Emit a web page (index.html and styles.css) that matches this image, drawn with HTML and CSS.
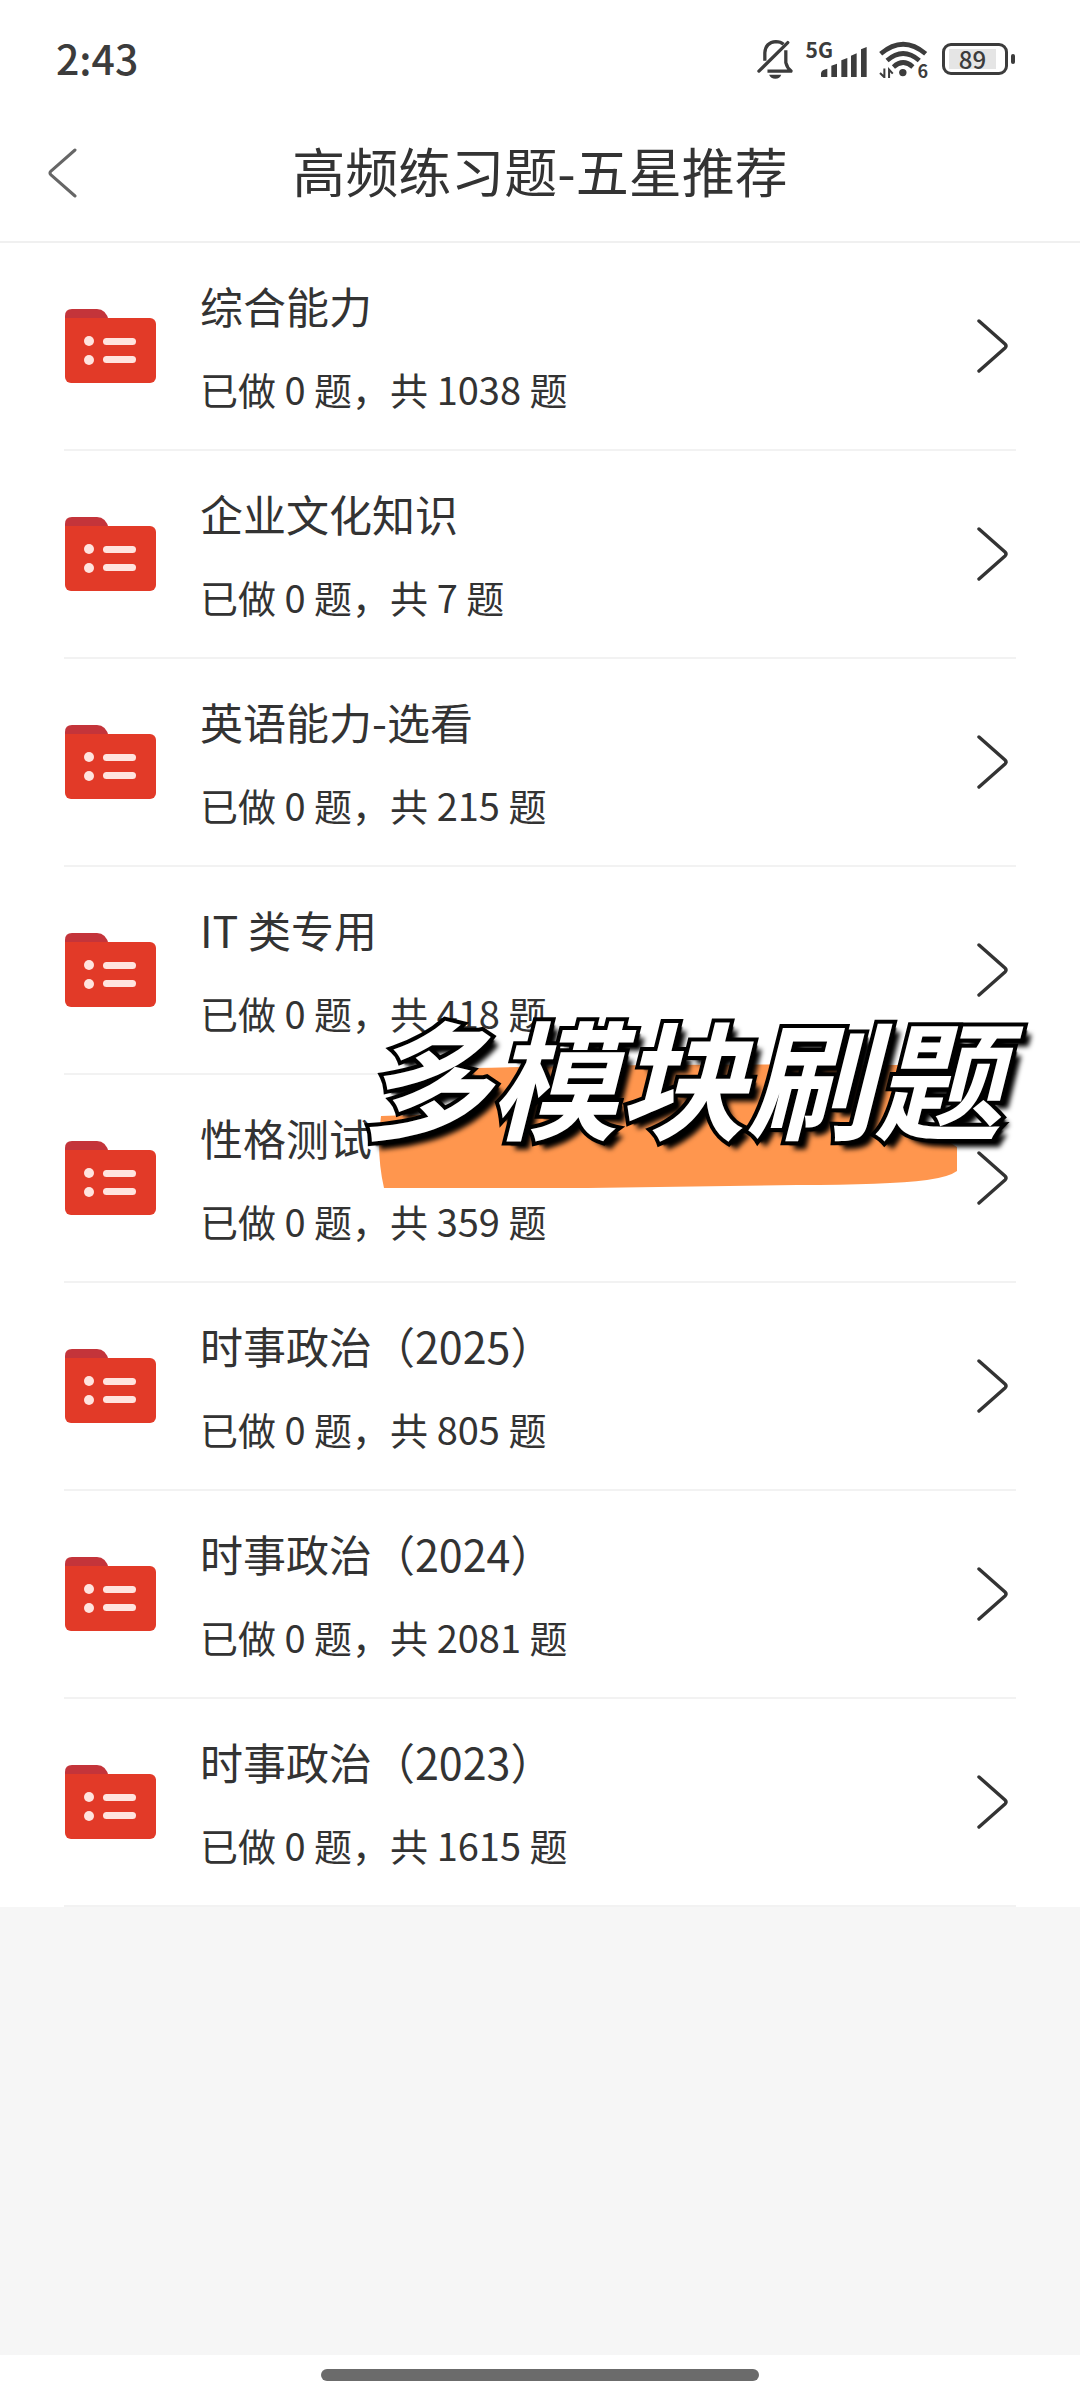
FILE: index.html
```html
<!doctype html>
<html lang="zh-CN">
  <head>
    <meta charset="utf-8">
    <meta name="viewport" content="width=device-width, initial-scale=1">
    <title>高频练习题-五星推荐</title>
    <link rel="stylesheet" href="styles.css">
  </head>
  <body>
    <!-- shared icons -->
    <svg class="defs" aria-hidden="true">
      <symbol id="folder" viewBox="0 0 92 76">
        <path fill="#c4343a" d="M1 20V8q0-7 7-7h25q9 0 12 12v7z"/>
        <rect x="1" y="10" width="91" height="65" rx="6" fill="#e23a28"/>
        <path fill="#e23a28" d="M1 10h12v12H1z"/>
        <g fill="#ffe4df">
          <circle cx="25" cy="33" r="5"/>
          <circle cx="25" cy="52" r="5"/>
          <rect x="39" y="30" width="33" height="7" rx="3.5"/>
          <rect x="39" y="48" width="33" height="7" rx="3.5"/>
        </g>
      </symbol>
      <symbol id="arrow" viewBox="0 0 32 56">
        <path fill="none" stroke="#333" stroke-width="3.4" stroke-linecap="round" d="M3 3l26 23q2 2 0 4L3 53"/>
      </symbol>
    </svg>

    <div class="statusbar">
      <span class="time">2:43</span>
      <div class="indicators">
        <svg class="bell" viewBox="58 58 114 122">
          <g fill="none" stroke="#3c3c3c" stroke-width="10" stroke-linecap="round">
            <path d="M66 156L154 69"/>
            <path stroke-linecap="butt" d="M84 124v-24q2-32 34-34q14 0 23 8"/>
            <path stroke-linecap="butt" stroke-linejoin="round" d="M148 92v38q4 16 16 26H92"/>
          </g>
          <path fill="#3c3c3c" d="M97 167h37q-4 12-18 12t-19-12z"/>
        </svg>
        <div class="mobile">
          <span class="net">5G</span>
          <svg class="signal" viewBox="246 75 138 90">
            <g fill="#3c3c3c">
              <path d="M246 165v-12q2-10 19-13v25zM277 165v-34l17-6v40zM307 165v-50l18-7v57zM336 165v-64l17-7v71zM366 165V82l17-7v90z"/>
            </g>
          </svg>
        </div>
        <div class="wifi">
          <svg viewBox="422 65 146 110">
            <g fill="none" stroke="#3c3c3c" stroke-width="14">
              <path d="M427 103q67-57 134 0"/>
              <path d="M446 123q48-42 96 0"/>
              <path d="M465 142q29-26 58 0"/>
            </g>
            <circle cx="493" cy="159" r="11" fill="#3c3c3c"/>
            <path fill="none" stroke="#3c3c3c" stroke-width="6" d="M438 147v26l-13-13M452 175v-25l11 12"/>
          </svg>
          <span class="gen">6</span>
        </div>
        <div class="battery"><span class="level">89</span></div>
      </div>
    </div>

    <header class="topbar">
      <button class="back" type="button" aria-label="返回">
        <svg viewBox="0 0 30 52">
          <path fill="none" stroke="#666" stroke-width="3" stroke-linecap="round" d="M27 3L3 24q-2 2 0 4l24 21"/>
        </svg>
      </button>
      <h1>高频练习题-五星推荐</h1>
    </header>

    <main>
      <div class="list">
        <a class="item" href="#">
          <svg class="folder"><use href="#folder"/></svg>
          <div class="info"><h2>综合能力</h2><p>已做 0 题，共 1038 题</p></div>
          <svg class="arrow"><use href="#arrow"/></svg>
        </a>
        <a class="item" href="#">
          <svg class="folder"><use href="#folder"/></svg>
          <div class="info"><h2>企业文化知识</h2><p>已做 0 题，共 7 题</p></div>
          <svg class="arrow"><use href="#arrow"/></svg>
        </a>
        <a class="item" href="#">
          <svg class="folder"><use href="#folder"/></svg>
          <div class="info"><h2>英语能力-选看</h2><p>已做 0 题，共 215 题</p></div>
          <svg class="arrow"><use href="#arrow"/></svg>
        </a>
        <a class="item" href="#">
          <svg class="folder"><use href="#folder"/></svg>
          <div class="info"><h2>IT 类专用</h2><p>已做 0 题，共 418 题</p></div>
          <svg class="arrow"><use href="#arrow"/></svg>
        </a>
        <a class="item" href="#">
          <svg class="folder"><use href="#folder"/></svg>
          <div class="info"><h2>性格测试</h2><p>已做 0 题，共 359 题</p></div>
          <svg class="arrow"><use href="#arrow"/></svg>
        </a>
        <a class="item" href="#">
          <svg class="folder"><use href="#folder"/></svg>
          <div class="info"><h2>时事政治（2025）</h2><p>已做 0 题，共 805 题</p></div>
          <svg class="arrow"><use href="#arrow"/></svg>
        </a>
        <a class="item" href="#">
          <svg class="folder"><use href="#folder"/></svg>
          <div class="info"><h2>时事政治（2024）</h2><p>已做 0 题，共 2081 题</p></div>
          <svg class="arrow"><use href="#arrow"/></svg>
        </a>
        <a class="item" href="#">
          <svg class="folder"><use href="#folder"/></svg>
          <div class="info"><h2>时事政治（2023）</h2><p>已做 0 题，共 1615 题</p></div>
          <svg class="arrow"><use href="#arrow"/></svg>
        </a>

        <!-- caption sticker over the list -->
        <div class="sticker">
          <svg class="brush" viewBox="0 0 580 126">
            <path fill="#ff964e" d="M3 53L95 50V5Q300 0 522 2l6 50 51 32v24q-8 6-30 9-40 5-130 5L210 125 6 125Q-2 90 3 53z"/>
          </svg>
          <span class="caption">多模块刷题</span>
        </div>
      </div>
    </main>

    <div class="gesture"><span></span></div>
  </body>
</html>
```
FILE: styles.css
```css
* {
  box-sizing: border-box;
}

body {
  margin: 0;
  min-height: 100vh;
  display: flex;
  flex-direction: column;
  background: #f6f6f6;
  color: #333;
  font-family: "Noto Sans CJK SC", sans-serif;
}

h1, h2, p {
  margin: 0;
  font-weight: 400;
}

svg {
  display: block;
}

.defs {
  position: absolute;
  width: 0;
  height: 0;
}

/* status bar */
.statusbar {
  display: flex;
  align-items: center;
  justify-content: space-between;
  height: 104px;
  padding: 14px 64px 0 56px;
  background: #fff;
  color: #3c3c3c;
}

.time {
  padding-bottom: 4px;
  font-size: 41px;
  line-height: 60px;
  font-weight: 500;
}

.indicators {
  display: flex;
  align-items: center;
  gap: 12px;
}

.bell {
  width: 38px;
  height: 40px;
}

.mobile {
  display: flex;
  align-items: flex-end;
  height: 36px;
}

.net {
  align-self: flex-start;
  margin-right: -12px;
  font-size: 21px;
  line-height: 16px;
  font-weight: 700;
}

.signal {
  width: 46px;
  height: 30px;
}

.wifi {
  position: relative;
}

.wifi svg {
  width: 49px;
  height: 37px;
}

.gen {
  position: absolute;
  right: 0;
  bottom: -1px;
  font-size: 18px;
  line-height: 18px;
  font-weight: 700;
}

.battery {
  position: relative;
  width: 66px;
  height: 32px;
  margin: 0 8px 0 2px;
  padding: 3px 9px 3px 4px;
  border: 3px solid #3c3c3c;
  border-radius: 9px;
}

.battery::after {
  content: "";
  position: absolute;
  top: 8px;
  right: -10px;
  width: 4px;
  height: 10px;
  border-radius: 2px;
  background: #3c3c3c;
}

.level {
  display: block;
  background: #e5e5e5;
  font-size: 24px;
  line-height: 20px;
  font-weight: 500;
  text-align: center;
}

/* title bar */
.topbar {
  display: flex;
  align-items: center;
  height: 139px;
  padding: 0 48px;
  background: #fff;
  border-bottom: 2px solid #f0f0f0;
}

.back {
  width: 30px;
  padding: 0;
  border: 0;
  background: none;
}

.back svg {
  width: 30px;
  height: 52px;
}

.topbar h1 {
  flex: 1;
  padding: 0 30px 6px 0;
  font-size: 53px;
  line-height: 76px;
  text-align: center;
}

/* list */
main {
  flex: 1;
}

.list {
  position: relative;
  padding: 0 64px;
  background: #fff;
}

.item {
  display: flex;
  align-items: center;
  padding: 33px 8px 34px 0;
  border-bottom: 2px solid #f2f2f2;
  color: inherit;
  text-decoration: none;
}

.folder {
  width: 92px;
  height: 76px;
}

.info {
  flex: 1;
  padding-left: 44px;
}

.info h2 {
  font-size: 43px;
  line-height: 58px;
}

.info p {
  margin-top: 29px;
  font-size: 38px;
  line-height: 52px;
}

.arrow {
  width: 32px;
  height: 56px;
}

/* caption sticker */
.sticker {
  position: absolute;
  top: 757px;
  right: 78px;
}

.brush {
  position: absolute;
  top: 63px;
  right: 44px;
  width: 580px;
  height: 126px;
}

.caption {
  position: relative;
  display: block;
  color: #fff;
  font-size: 128px;
  line-height: 150px;
  font-weight: 700;
  font-style: italic;
  white-space: nowrap;
  -webkit-text-stroke: 8px #000;
  paint-order: stroke fill;
  text-shadow: 4px 4px 2px #000, 8px 8px 5px #000;
}

/* gesture bar */
.gesture {
  display: flex;
  justify-content: center;
  height: 46px;
  padding-top: 14px;
  background: #fff;
}

.gesture span {
  width: 438px;
  height: 12px;
  border-radius: 6px;
  background: #6b6b6b;
}
```
